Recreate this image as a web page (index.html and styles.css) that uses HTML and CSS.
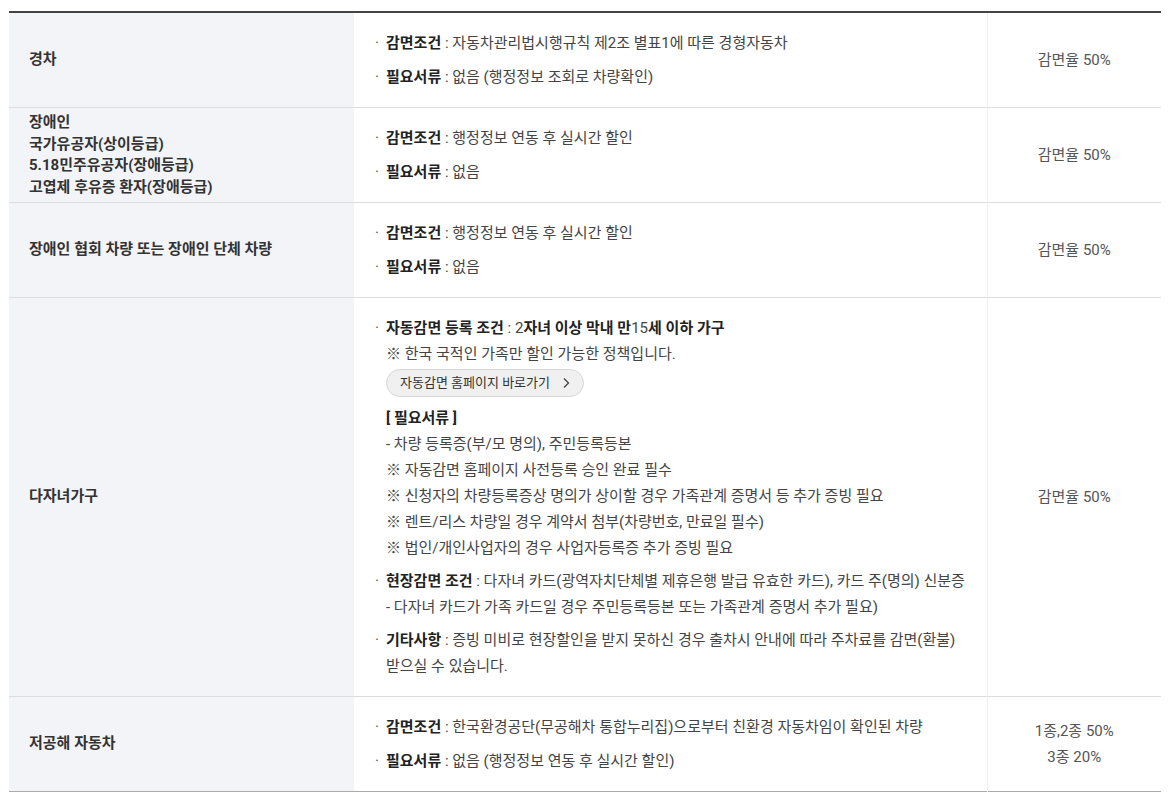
FILE: index.html
```html
<!DOCTYPE html>
<html lang="ko">
<head>
<meta charset="utf-8">
<title>감면 안내</title>
<link rel="stylesheet" href="styles.css">
</head>
<body>
<div class="wrap">
<table class="tbl">
  <colgroup><col class="c1"><col class="c2"><col class="c3"></colgroup>
  <tbody>
    <tr>
      <th>경차</th>
      <td class="desc">
        <ul class="items">
          <li><span class="dot">·</span><p><b>감면조건</b> : 자동차관리법시행규칙 제2조 별표1에 따른 경형자동차</p></li>
          <li><span class="dot">·</span><p><b>필요서류</b> : 없음 (행정정보 조회로 차량확인)</p></li>
        </ul>
      </td>
      <td class="rate">감면율 50%</td>
    </tr>
    <tr>
      <th class="multi">장애인<br>국가유공자(상이등급)<br>5.18민주유공자(장애등급)<br>고엽제 후유증 환자(장애등급)</th>
      <td class="desc">
        <ul class="items">
          <li><span class="dot">·</span><p><b>감면조건</b> : 행정정보 연동 후 실시간 할인</p></li>
          <li><span class="dot">·</span><p><b>필요서류</b> : 없음</p></li>
        </ul>
      </td>
      <td class="rate">감면율 50%</td>
    </tr>
    <tr>
      <th>장애인 협회 차량 또는 장애인 단체 차량</th>
      <td class="desc">
        <ul class="items">
          <li><span class="dot">·</span><p><b>감면조건</b> : 행정정보 연동 후 실시간 할인</p></li>
          <li><span class="dot">·</span><p><b>필요서류</b> : 없음</p></li>
        </ul>
      </td>
      <td class="rate">감면율 50%</td>
    </tr>
    <tr>
      <th>다자녀가구</th>
      <td class="desc">
        <ul class="items tight">
          <li><span class="dot">·</span>
            <div>
              <p><b>자동감면 등록 조건</b> : <b class="num">2</b><b>자녀 이상 막내 만</b>15<b>세 이하 가구</b></p>
              <p>※ 한국 국적인 가족만 할인 가능한 정책입니다.</p>
              <a class="btn" href="#">자동감면 홈페이지 바로가기
                <svg class="chev" width="8" height="12" viewBox="0 0 8 12"><path d="M2 1.5 L6.5 6 L2 10.5" fill="none" stroke="#444" stroke-width="1.3"/></svg>
              </a>
              <p class="sub"><b>[ 필요서류 ]</b></p>
              <p>- 차량 등록증(부/모 명의), 주민등록등본</p>
              <p>※ 자동감면 홈페이지 사전등록 승인 완료 필수</p>
              <p>※ 신청자의 차량등록증상 명의가 상이할 경우 가족관계 증명서 등 추가 증빙 필요</p>
              <p>※ 렌트/리스 차량일 경우 계약서 첨부(차량번호, 만료일 필수)</p>
              <p>※ 법인/개인사업자의 경우 사업자등록증 추가 증빙 필요</p>
            </div>
          </li>
          <li><span class="dot">·</span>
            <div>
              <p><b>현장감면 조건</b> : 다자녀 카드(광역자치단체별 제휴은행 발급 유효한 카드), 카드 주(명의) 신분증</p>
              <p>- 다자녀 카드가 가족 카드일 경우 주민등록등본 또는 가족관계 증명서 추가 필요)</p>
            </div>
          </li>
          <li><span class="dot">·</span><p><b>기타사항</b> : 증빙 미비로 현장할인을 받지 못하신 경우 출차시 안내에 따라 주차료를 감면(환불)<br>받으실 수 있습니다.</p></li>
        </ul>
      </td>
      <td class="rate">감면율 50%</td>
    </tr>
    <tr class="last">
      <th>저공해 자동차</th>
      <td class="desc">
        <ul class="items">
          <li><span class="dot">·</span><p><b>감면조건</b> : 한국환경공단(무공해차 통합누리집)으로부터 친환경 자동차임이 확인된 차량</p></li>
          <li><span class="dot">·</span><p><b>필요서류</b> : 없음 (행정정보 연동 후 실시간 할인)</p></li>
        </ul>
      </td>
      <td class="rate two">1종,2종 50%<br>3종 20%</td>
    </tr>
  </tbody>
</table>
</div>
</body>
</html>
```
FILE: styles.css
```css
html, body {
  margin: 0;
  padding: 0;
  background: #fff;
}
body {
  font-family: Roboto, "Noto Sans CJK KR", sans-serif;
  font-size: 15px;
  color: #444;
}
.wrap {
  padding: 11px 10px 0 9px;
}
.tbl {
  width: 1152px;
  border-collapse: collapse;
  table-layout: fixed;
  border-top: 2px solid #444;
  border-bottom: 1px solid #aaa;
}
.c1 { width: 345px; }
.c2 { width: 633px; }
.c3 { width: 174px; }
.tbl tr {
  border-bottom: 1px solid #ddd;
}
.tbl tr.last {
  border-bottom: 1px solid #aaa;
}
.tbl th {
  background: #f3f4f8;
  text-align: left;
  font-weight: 700;
  color: #333;
  padding: 0 20px;
  line-height: 21.5px;
  vertical-align: middle;
}
.tbl td {
  vertical-align: middle;
}
.desc {
  padding: 17px 10px 17px 21px;
}
.rate {
  text-align: center;
  color: #555;
  border-left: 1px solid #eee;
  line-height: 26px;
}
.items {
  list-style: none;
  margin: 0;
  padding: 0;
  line-height: 26px;
}
.items li {
  display: grid;
  grid-template-columns: 11px 1fr;
}
.items li + li {
  margin-top: 8px;
}
.items.tight li + li {
  margin-top: 7px;
}
.items p {
  margin: 0;
}
.items b {
  color: #222;
  font-weight: 700;
}
.items b.num {
  font-weight: 400;
  color: #444;
}
.dot {
  color: #555;
}
.btn {
  display: inline-flex;
  align-items: center;
  gap: 12px;
  height: 26px;
  margin: 2px 0 8px;
  padding: 0 13px;
  border: 1px solid #d8d8d8;
  border-radius: 14px;
  background: #f0f0f0;
  color: #333;
  font-size: 13px;
  text-decoration: none;
  line-height: 26px;
}
.chev {
  display: block;
}
```
